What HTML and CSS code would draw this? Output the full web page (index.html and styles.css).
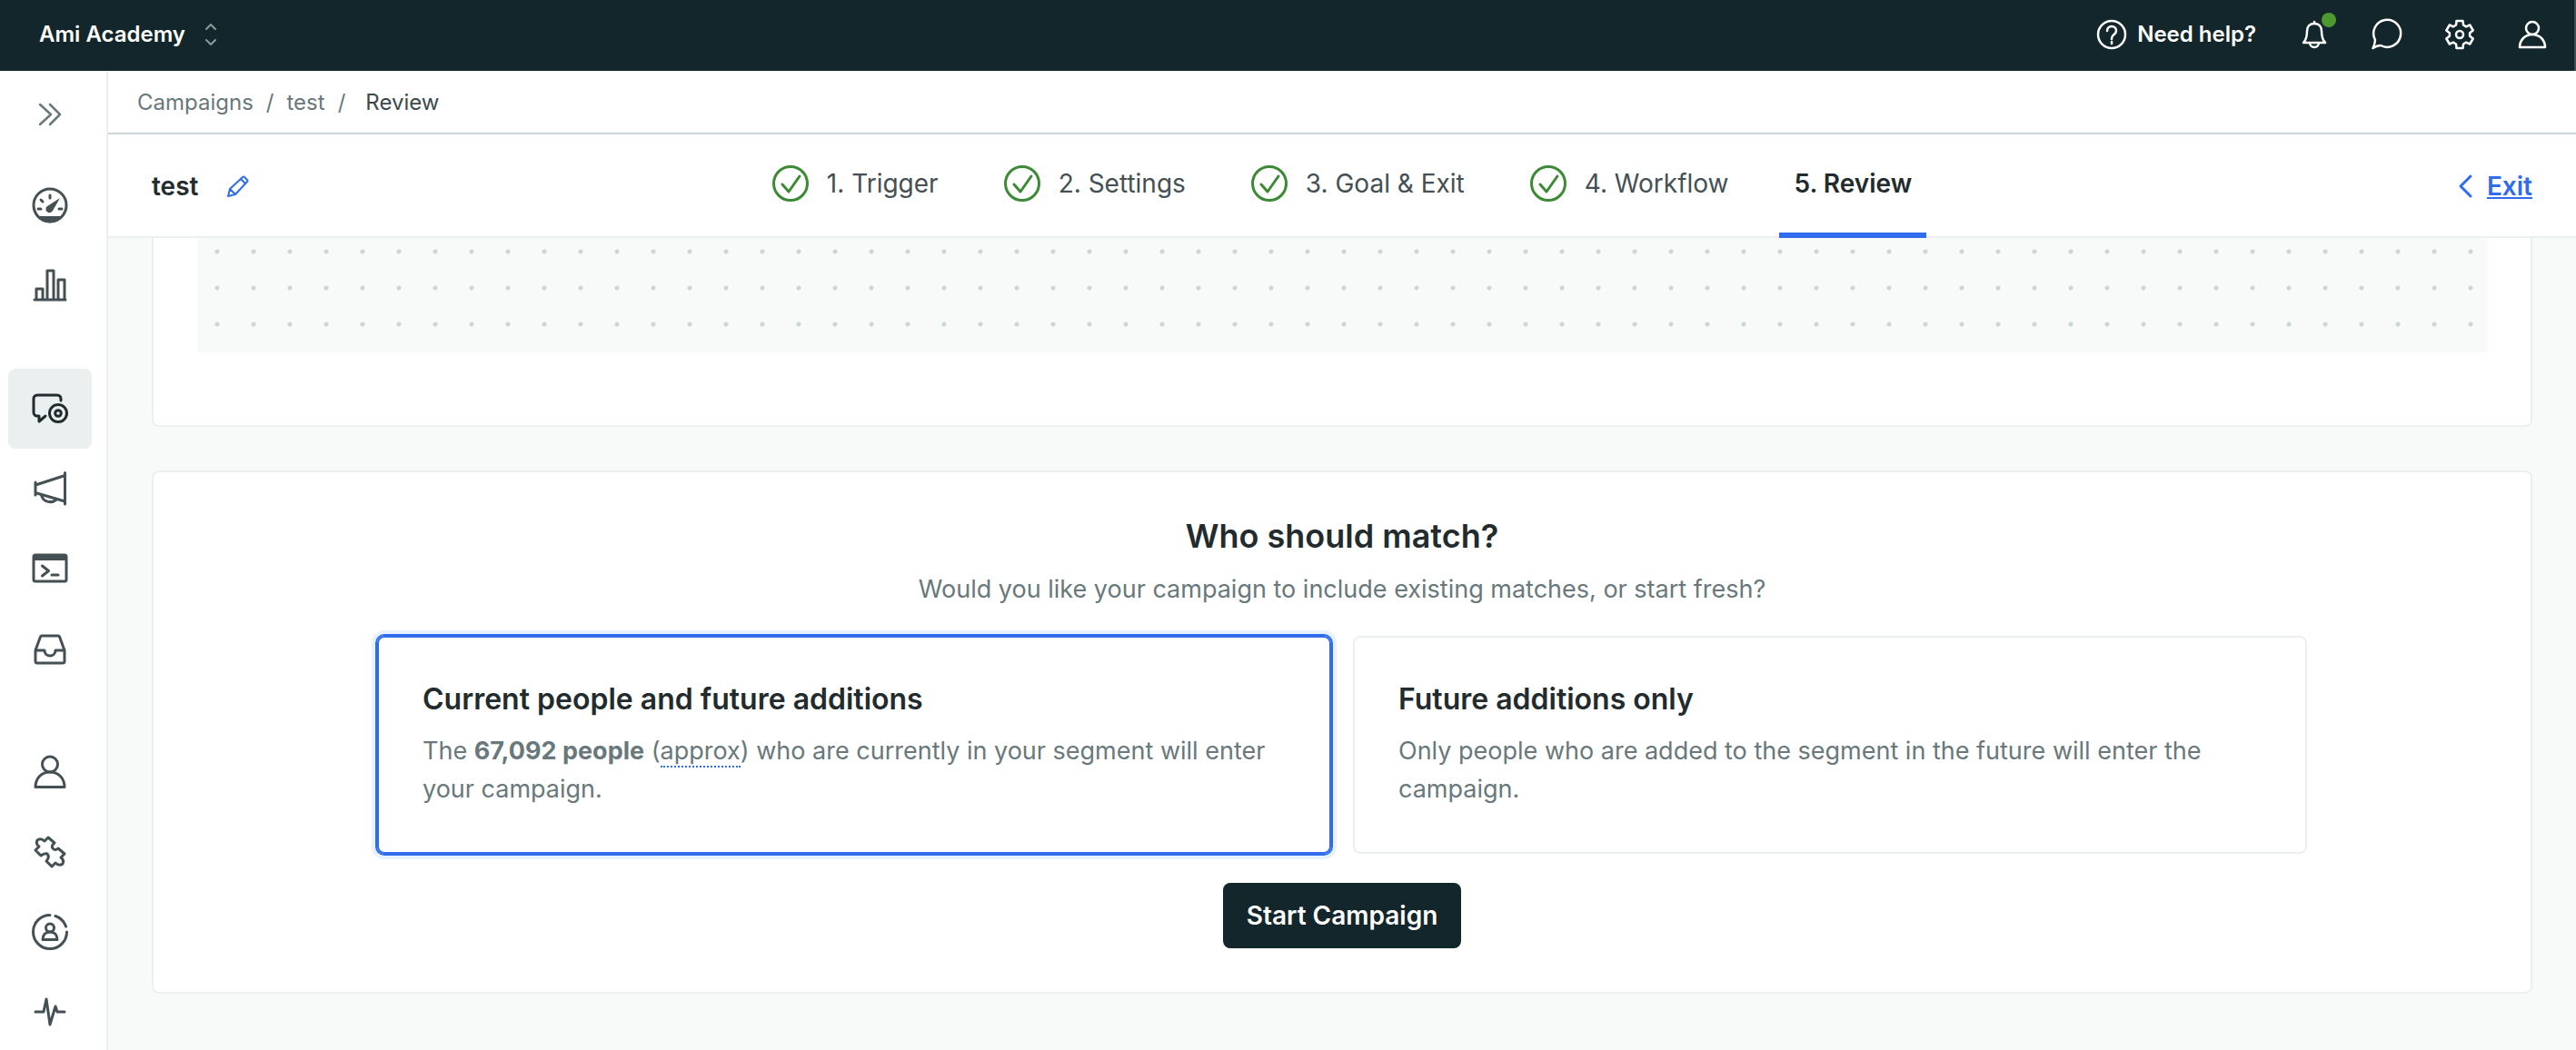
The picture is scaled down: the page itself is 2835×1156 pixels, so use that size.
FILE: index.html
```html
<!DOCTYPE html>
<html lang="en">
<head>
    <meta charset="UTF-8">
    <meta name="viewport" content="width=device-width, initial-scale=1.0">
    <title>Review campaign</title>
    <link rel="stylesheet" href="styles.css">
</head>
<body>

<header class="topbar">
    <button class="workspace" type="button">
        Ami Academy
        <svg width="16" height="28" viewBox="0 0 16 28"><path d="M3 8l5-5 5 5M3 20l5 5 5-5"/></svg>
    </button>
    <nav class="topbar-actions" aria-label="Account">
        <a class="help" href="#">
            <svg class="icon" viewBox="0 0 32 32"><circle cx="16" cy="16" r="15"/><path d="M11 12c0-3 2-5 5-5s5 2 5 5c0 4-5 4-5 8v1M16 24v2"/></svg>
            Need help?
        </a>
        <a class="bell" href="#" aria-label="Notifications">
            <svg class="icon" viewBox="0 0 32 32"><path d="M16 2v2M4 25c3-3 4-6 4-13 0-5 3-8 8-8s8 3 8 8c0 7 1 10 4 13zM11 25a5 5 0 0 0 10 0"/></svg>
            <span class="badge"></span>
        </a>
        <a href="#" aria-label="Messages">
            <svg class="icon" viewBox="0 0 32 32"><path d="M.5 31q2-4 2.500-9a15 15 0 1 1 6 6q-4 0-8.500 3z"/></svg>
        </a>
        <a href="#" aria-label="Settings">
            <svg class="icon" viewBox="0 0 32 32"><path d="M12 5.500L12.500 1h7l.5 4.500 3.100 1.800 4.100-1.800 3.500 6-3.600 2.700v3.600l3.600 2.700-3.500 6-4.100-1.800-3.100 1.800-.5 4.500h-7l-.5-4.500-3.100-1.800-4.100 1.800-3.500-6 3.600-2.700v-3.600l-3.600-2.700 3.500-6 4.100 1.800z"/><circle cx="16" cy="16" r="4"/></svg>
        </a>
        <a href="#" aria-label="Profile">
            <svg class="icon" viewBox="0 0 32 32"><circle cx="16" cy="9" r="7"/><path d="M2 30c0-8 6-14 14-14s14 6 14 14z"/></svg>
        </a>
    </nav>
</header>

<div class="layout">
    <nav class="sidebar" aria-label="Main">
        <button class="sidebar-toggle" type="button" aria-label="Expand menu">
            <svg viewBox="0 0 40 40"><path d="M9 9l12 11L9 31M20 9l11 11-11 11"/></svg>
        </button>
        <div class="sidebar-group">
            <a href="#" aria-label="Dashboard">
                <svg viewBox="0 0 40 40"><circle cx="20" cy="20" r="18"/><path class="solid" d="M5 32h30a19 19 0 0 1-30 0zM31 12L23 26a4 4 0 1 1-6-5z"/><path d="M20 9v3M10 14l2 2M7 24h3M30 24h3"/></svg>
            </a>
            <a href="#" aria-label="Analysis">
                <svg viewBox="0 0 40 40"><path d="M3 36h34M5 36V24h7v12M17 36V4h7v32M29 36V14h7v22"/></svg>
            </a>
        </div>
        <div class="sidebar-group">
            <a class="active" href="#" aria-label="Campaigns">
                <svg viewBox="0 0 40 40"><path d="M32 11V9a4 4 0 0 0-4-4H6a4 4 0 0 0-4 4v15a4 4 0 0 0 4 4h2v6l7-6"/><circle cx="29" cy="25" r="9.5"/><circle cx="29" cy="25" r="3.3"/></svg>
            </a>
            <a href="#" aria-label="Broadcasts">
                <svg viewBox="0 0 40 40"><path d="M4 13v14M36.500 2.500v34.500M4 16L36.500 5.500M4 24.500L36.500 34M10.500 27c2 9 13 9 16.500 5"/></svg>
            </a>
            <a href="#" aria-label="Transactional">
                <svg viewBox="0 0 40 40"><rect x="2" y="5" width="36" height="29" rx="2"/><path class="solid" d="M2 5h36v6H2z"/><path d="M11.500 17l7 5.500-7 5.500M22 27h7"/></svg>
            </a>
            <a href="#" aria-label="Deliveries">
                <svg viewBox="0 0 40 40"><path d="M4 22v12q0 2 2 2h28q2 0 2-2V22L30.500 7q-.5-1-1.500-1H11q-1 0-1.500 1zh10c0 8 12 8 12 0h10"/></svg>
            </a>
        </div>
        <div class="sidebar-group">
            <a href="#" aria-label="People">
                <svg viewBox="0 0 40 40"><circle cx="20" cy="11.500" r="8.500"/><path d="M4 36.500c0-10 7-16.500 16-16.500s16 6.500 16 16.500z"/></svg>
            </a>
            <a href="#" aria-label="Integrations">
                <svg viewBox="0 0 40 40"><path d="M18 4l7 6q-4 3-2 6 3 3 6 0l7 6-4 4q4 3 2 7-4 3-8-1l-4 4-6-6q4-4 1-8-3-1-7 2l-6-6 4-4q-4-3-2-7 4-3 8 1z"/></svg>
            </a>
            <a href="#" aria-label="Segments">
                <svg viewBox="0 0 40 40"><path d="M38.500 20A18.500 18.500 0 1 1 20 1.500M26 2.500A18.500 18.500 0 0 1 37.500 14"/><circle cx="20" cy="15.500" r="4.500"/><path d="M12 28.500c0-5 3-8.500 8-8.500s8 3.500 8 8.500z"/></svg>
            </a>
            <a href="#" aria-label="Activity logs">
                <svg viewBox="0 0 40 40"><path d="M4 20h9l3-14 4 28 6-20 2 6h8"/></svg>
            </a>
        </div>
    </nav>

    <div class="page">
        <nav class="breadcrumb" aria-label="Breadcrumb">
            <a href="#">Campaigns</a>
            <span>/</span>
            <a href="#">test</a>
            <span>/</span>
            <span class="current">Review</span>
        </nav>

        <div class="stepbar">
            <div class="campaign-name">
                <strong>test</strong>
                <button type="button" aria-label="Rename campaign">
                    <svg viewBox="0 0 24 24"><path d="M1 23l2-8L17 2q1-1 2 0l3 3q1 1 0 2L9 21zM15 4l5 5M3 15l6 6"/></svg>
                </button>
            </div>
            <nav class="steps" aria-label="Steps">
                <a href="#"><svg viewBox="0 0 40 40"><circle cx="20" cy="20" r="18.500"/><path d="M11 21l7 8 12-17"/></svg>1. Trigger</a>
                <a href="#"><svg viewBox="0 0 40 40"><circle cx="20" cy="20" r="18.500"/><path d="M11 21l7 8 12-17"/></svg>2. Settings</a>
                <a href="#"><svg viewBox="0 0 40 40"><circle cx="20" cy="20" r="18.500"/><path d="M11 21l7 8 12-17"/></svg>3. Goal &amp; Exit</a>
                <a href="#"><svg viewBox="0 0 40 40"><circle cx="20" cy="20" r="18.500"/><path d="M11 21l7 8 12-17"/></svg>4. Workflow</a>
                <a class="active" href="#">5. Review</a>
            </nav>
            <a class="exit" href="#">
                <svg viewBox="0 0 16 28"><path d="M14 3L3 14l11 11"/></svg>
                <span>Exit</span>
            </a>
        </div>

        <main class="content">
            <section class="card workflow-card">
                <div class="canvas"></div>
            </section>

            <section class="card match-card">
                <h2>Who should match?</h2>
                <p class="lead">Would you like your campaign to include existing matches, or start fresh?</p>
                <div class="options">
                    <button class="option selected" type="button">
                        <span class="option-title">Current people and future additions</span>
                        <span class="option-text">The <b>67,092 people</b> (<span class="approx">approx</span>) who are currently in your segment will enter your campaign.</span>
                    </button>
                    <button class="option" type="button">
                        <span class="option-title">Future additions only</span>
                        <span class="option-text">Only people who are added to the segment in the future will enter the campaign.</span>
                    </button>
                </div>
                <button class="start" type="button">Start Campaign</button>
            </section>
        </main>
    </div>
</div>

</body>
</html>
```

FILE: styles.css
```css
* {
    box-sizing: border-box;
}
body {
    display: flex;
    flex-direction: column;
    height: 100vh;
    margin: 0;
    overflow: hidden;
    background-color: #fff;
    color: #222b2d;
    font-family: Inter, sans-serif;
    font-size: 28px;
    line-height: 42px;
}
a {
    color: inherit;
    text-decoration: none;
}
button {
    padding: 0;
    border: none;
    background: none;
    color: inherit;
    font: inherit;
    cursor: pointer;
}
svg {
    display: block;
    flex: none;
    overflow: visible;
    fill: none;
    stroke: currentColor;
    stroke-width: 2;
    stroke-linecap: round;
    stroke-linejoin: round;
}

/* Top bar */
.topbar {
    display: flex;
    flex: none;
    align-items: center;
    justify-content: space-between;
    height: 78px;
    padding: 0 30px 2px 43px;
    border-right: 2px solid #3f5053;
    background-color: #12262b;
    color: #fff;
    font-size: 24px;
    font-weight: 600;
    line-height: 32px;
}
.workspace {
    display: flex;
    align-items: center;
    gap: 20px;
}
.workspace svg {
    color: #8d9a9d;
}
.topbar-actions {
    display: flex;
    align-items: center;
    gap: 48px;
}
.help {
    display: flex;
    align-items: center;
    gap: 12px;
}
.icon {
    width: 32px;
    height: 32px;
    stroke-width: 2.5;
}
.bell {
    position: relative;
}
.badge {
    position: absolute;
    top: -8px;
    right: -8px;
    width: 16px;
    height: 16px;
    border-radius: 50%;
    background-color: #4c9a2f;
}

.layout {
    display: flex;
    flex: 1;
    min-height: 0;
}

/* Sidebar */
.sidebar {
    display: flex;
    flex: none;
    flex-direction: column;
    gap: 48px;
    width: 119px;
    padding: 4px 16px 0 9px;
    border-right: 2px solid #ebefef;
    overflow: hidden;
    color: #445053;
}
.sidebar svg {
    width: 40px;
    height: 40px;
    stroke-width: 3;
}
.sidebar .solid {
    fill: currentColor;
    stroke: none;
}
.sidebar-toggle,
.sidebar-group a {
    display: flex;
    flex: none;
    align-items: center;
    justify-content: center;
    height: 88px;
    border-radius: 8px;
}
.sidebar-toggle {
    margin-bottom: -36px;
    color: #68787b;
}
.sidebar .sidebar-toggle svg {
    stroke-width: 2.5;
}
.sidebar-group a.active {
    background-color: #ebefef;
    color: #222b2d;
}

/* Page head */
.page {
    display: flex;
    flex: 1;
    flex-direction: column;
    min-width: 0;
}
.breadcrumb {
    display: flex;
    flex: none;
    align-items: center;
    gap: 14px;
    height: 70px;
    padding: 2px 32px 0;
    border-bottom: 2px solid #ccd6d8;
    color: #68787b;
    font-size: 24px;
    line-height: 32px;
}
.breadcrumb .current {
    margin-left: 8px;
    color: #3c494c;
}
.stepbar {
    display: grid;
    flex: none;
    grid-template-columns: 1fr auto 1fr;
    align-items: center;
    height: 114px;
    padding: 0 48px 2px;
    border-bottom: 2px solid #ebefef;
}
.campaign-name {
    display: flex;
    align-items: center;
    gap: 32px;
}
.campaign-name strong {
    font-weight: 600;
}
.campaign-name svg {
    width: 24px;
    height: 24px;
    color: #2f6dee;
}
.steps {
    display: flex;
    align-self: start;
    gap: 40px;
    height: 114px;
    color: #445053;
}
.steps a {
    display: flex;
    align-items: center;
    gap: 20px;
    padding: 0 16px;
    border-bottom: 6px solid transparent;
}
.steps a.active {
    border-bottom-color: #2f6dee;
    color: #222b2d;
    font-weight: 600;
}
.steps svg {
    width: 40px;
    height: 40px;
    color: #3c8a35;
    stroke-width: 3;
}
.exit {
    display: flex;
    align-items: center;
    justify-self: end;
    gap: 16px;
    color: #2f6dee;
    font-weight: 600;
}
.exit span {
    text-decoration: underline;
}
.exit svg {
    width: 16px;
    height: 28px;
    stroke-width: 3;
}

/* Content */
.content {
    display: flex;
    flex: 1;
    flex-direction: column;
    gap: 48px;
    min-height: 0;
    padding: 0 48px;
    overflow: hidden;
    background-color: #f8faf9;
}
.card {
    flex: none;
    padding: 48px;
    border: 2px solid #ebefef;
    border-radius: 8px;
    background-color: #fff;
}
.workflow-card {
    padding-top: 0;
    padding-bottom: 80px;
    border-top: none;
    border-top-left-radius: 0;
    border-top-right-radius: 0;
}
.canvas {
    height: 126px;
    background-color: #f8faf9;
    background-image: radial-gradient(circle, #ccd6d8 2px, transparent 3px);
    background-position: 2px -5px;
    background-size: 40px 40px;
}
.match-card {
    display: flex;
    flex-direction: column;
    align-items: center;
}
.match-card h2 {
    margin: 0 0 16px;
    font-size: 36px;
    font-weight: 600;
    line-height: 44px;
}
.lead {
    margin: 0 0 30px;
    color: #68787b;
    font-size: 27px;
}
.options {
    display: grid;
    grid-template-columns: 1fr 1fr;
    gap: 24px;
    width: 100%;
    max-width: 2124px;
    margin-bottom: 32px;
}
.option {
    display: flex;
    flex-direction: column;
    gap: 16px;
    padding: 48px;
    border: 2px solid #ebefef;
    border-radius: 8px;
    text-align: left;
}
.option.selected {
    border-color: #2f6dee;
    box-shadow: 0 0 0 2px #2f6dee, 0 0 0 6px #e8f2fe;
}
.option-title {
    font-size: 32px;
    font-weight: 600;
    line-height: 40px;
}
.option-text {
    color: #68787b;
    font-size: 27px;
}
.approx {
    border-bottom: 2px dotted #2f6dee;
}
.start {
    height: 72px;
    padding: 0 26px;
    border-radius: 8px;
    background-color: #12262b;
    color: #fff;
    font-weight: 600;
}
```
